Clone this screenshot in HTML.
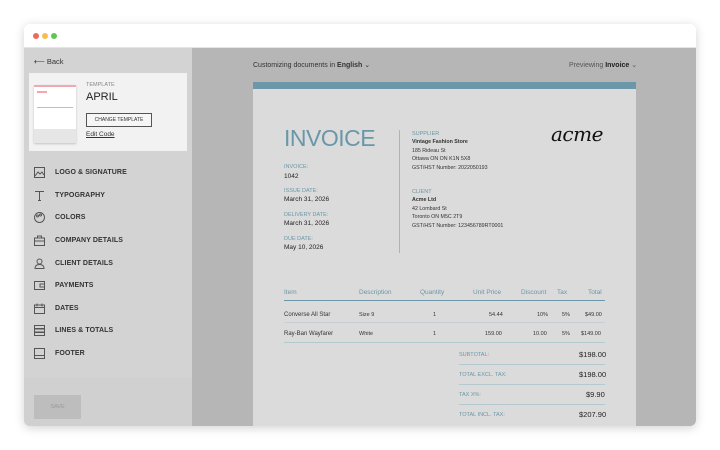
<!DOCTYPE html>
<html><head><meta charset="utf-8"><style>
*{margin:0;padding:0;box-sizing:border-box}
body{width:720px;height:450px;background:#fff;font-family:"Liberation Sans",sans-serif;position:relative;overflow:hidden}
.win{position:absolute;left:24px;top:24px;width:672px;height:402px;border-radius:6px;overflow:hidden;box-shadow:0 2px 10px rgba(0,0,0,.18);background:#fff}
.tb{height:24px;background:#fff;border-bottom:1px solid #e4e4e4;position:relative}
.dot{position:absolute;top:9px;width:6px;height:6px;border-radius:50%}
.side{position:absolute;left:0;top:24px;width:168px;height:378px;background:#d3d3d3}
.main{position:absolute;left:168px;top:24px;width:504px;height:378px;background:#b6b6b6;overflow:hidden}
.abs{position:absolute;white-space:nowrap}
.nav{position:absolute;left:31px;font-size:7px;font-weight:bold;color:#333;letter-spacing:.1px}
.ic{position:absolute;left:10px;width:11px;height:11px}
.paper{position:absolute;left:61px;top:34px;width:383px;height:350px;background:#dbdbdb}
.lbl{color:#6a97a8;font-size:5.5px}
.v{color:#222;font-size:6.5px}
.s{color:#333;font-size:5.3px;line-height:8.5px}
.th{position:absolute;top:207px;color:#6a97a8;font-size:6.5px}
.td{position:absolute;font-size:5.5px;color:#333}
</style></head><body>
<div class="win">
 <div class="tb"><div class="dot" style="left:9px;background:#ec6a5e"></div><div class="dot" style="left:18px;background:#f4bf4f"></div><div class="dot" style="left:27px;background:#61c554"></div></div>
 <div class="side">
  <div class="abs" style="left:10px;top:9px;font-size:7.5px;color:#333">⟵ Back</div>
  <div class="abs" style="left:5px;top:25px;width:158px;height:78px;background:#f2f2f2"></div>
  <div class="abs" style="left:10px;top:37px;width:42px;height:58px;background:#fff;box-shadow:0 1px 2px rgba(0,0,0,.2)">
   <div style="height:2px;background:#f3a7b0"></div>
   <div style="position:absolute;left:3px;top:6px;width:10px;height:2px;background:#f3a7b0"></div>
   <div style="position:absolute;left:3px;top:22px;width:36px;height:1px;background:#f3a7b0"></div>
   <div style="position:absolute;left:0;bottom:0;width:42px;height:14px;background:#e6e6e6"></div>
  </div>
  <div class="abs" style="left:62px;top:34px;font-size:5.5px;color:#888">TEMPLATE</div>
  <div class="abs" style="left:62px;top:43px;font-size:11px;color:#222">APRIL</div>
  <div class="abs" style="left:62px;top:65px;width:66px;height:14px;border:1px solid #555;background:#f6f6f6;font-size:5px;color:#333;text-align:center;line-height:12px">CHANGE TEMPLATE</div>
  <div class="abs" style="left:62px;top:83px;font-size:6.5px;color:#333;text-decoration:underline">Edit Code</div>
  <div class="nav" style="top:121px">LOGO &amp; SIGNATURE</div><svg class="ic" style="top:119px" viewBox="0 0 11 11" fill="none" stroke="#555"><rect x=".5" y=".5" width="10" height="10"/><path d="M1 9l3-4 2 2 2-2 2 3"/></svg>
  <div class="nav" style="top:144px">TYPOGRAPHY</div><svg class="ic" style="top:142px" viewBox="0 0 11 11" fill="none" stroke="#555"><path d="M1 1.5h9M5.5 1.5v9M4 10.5h3"/></svg>
  <div class="nav" style="top:166px">COLORS</div><svg class="ic" style="top:164px" viewBox="0 0 11 11" fill="none" stroke="#555"><circle cx="5.5" cy="5.5" r="5"/><circle cx="3.5" cy="4" r="1"/><circle cx="6.5" cy="3" r="1"/></svg>
  <div class="nav" style="top:189px">COMPANY DETAILS</div><svg class="ic" style="top:187px" viewBox="0 0 11 11" fill="none" stroke="#555"><rect x=".5" y="3" width="10" height="7.5"/><path d="M3.5 3V1h4v2M.5 6h10"/></svg>
  <div class="nav" style="top:212px">CLIENT DETAILS</div><svg class="ic" style="top:210px" viewBox="0 0 11 11" fill="none" stroke="#555"><circle cx="5.5" cy="3.5" r="2.5"/><path d="M1 10.5c0-3 2-4 4.5-4s4.5 1 4.5 4z"/></svg>
  <div class="nav" style="top:234px">PAYMENTS</div><svg class="ic" style="top:232px" viewBox="0 0 11 11" fill="none" stroke="#555"><rect x=".5" y="1.5" width="10" height="8"/><path d="M6 4h4.5v3H6z"/></svg>
  <div class="nav" style="top:257px">DATES</div><svg class="ic" style="top:255px" viewBox="0 0 11 11" fill="none" stroke="#555"><rect x=".5" y="2" width="10" height="8.5"/><path d="M.5 4.5h10M3 .5v3M8 .5v3"/></svg>
  <div class="nav" style="top:279px">LINES &amp; TOTALS</div><svg class="ic" style="top:277px" viewBox="0 0 11 11" fill="none" stroke="#555"><rect x=".5" y=".5" width="10" height="3"/><rect x=".5" y="4" width="10" height="3"/><rect x=".5" y="7.5" width="10" height="3"/></svg>
  <div class="nav" style="top:302px">FOOTER</div><svg class="ic" style="top:300px" viewBox="0 0 11 11" fill="none" stroke="#555"><rect x=".5" y=".5" width="10" height="10"/><path d="M.5 7.5h10"/></svg>
  <div class="abs" style="left:0;top:330px;width:168px;height:48px;background:#d0d0d0"></div>
  <div class="abs" style="left:10px;top:347px;width:47px;height:24px;background:#bdbdbd;font-size:5.5px;color:#999;text-align:center;line-height:24px">SAVE</div>
 </div>
 <div class="main">
  <div class="abs" style="left:61px;top:13px;font-size:7px;color:#333">Customizing documents in <b>English</b> ⌄</div>
  <div class="abs" style="left:377px;top:13px;font-size:7px;color:#555">Previewing <b style="color:#222">Invoice</b> ⌄</div>
  <div class="paper">
   <div style="height:7px;background:#6b97a8"></div>
   <div class="abs" style="left:31px;top:43px;font-size:23px;color:#6a97a8;letter-spacing:-.5px">INVOICE</div>
   <div class="abs lbl" style="left:31px;top:82px">INVOICE:</div><div class="abs v" style="left:31px;top:91px">1042</div>
   <div class="abs lbl" style="left:31px;top:106px">ISSUE DATE:</div><div class="abs v" style="left:31px;top:114px">March 31, 2026</div>
   <div class="abs lbl" style="left:31px;top:130px">DELIVERY DATE:</div><div class="abs v" style="left:31px;top:138px">March 31, 2026</div>
   <div class="abs lbl" style="left:31px;top:154px">DUE DATE:</div><div class="abs v" style="left:31px;top:162px">May 10, 2026</div>
   <div class="abs" style="left:146px;top:48px;width:1px;height:123px;background:#9fb9c3"></div>
   <div class="abs lbl" style="left:159px;top:49px">SUPPLIER</div>
   <div class="abs s" style="left:159px;top:56px"><b>Vintage Fashion Store</b><br>185 Rideau St<br>Ottawa ON ON K1N 5X8<br>GST/HST Number: 2022050193</div>
   <div class="abs lbl" style="left:159px;top:107px">CLIENT</div>
   <div class="abs s" style="left:159px;top:114px"><b>Acme Ltd</b><br>42 Lombard St<br>Toronto ON M5C 2T9<br>GST/HST Number: 123456789RT0001</div>
   <div class="abs" style="left:298px;top:40px;font-size:20px;font-family:'DejaVu Serif',serif;font-style:italic;color:#111;letter-spacing:-.5px">acme</div>
   <div class="th" style="left:31px">Item</div><div class="th" style="left:106px">Description</div><div class="th" style="left:167px">Quantity</div><div class="th" style="left:220px">Unit Price</div><div class="th" style="left:268px">Discount</div><div class="th" style="left:304px">Tax</div><div class="th" style="left:335px">Total</div>
   <div class="abs" style="left:31px;top:218px;width:321px;height:1px;background:#6b97a8"></div>
   <div class="td" style="left:31px;top:230px;font-size:6px">Converse All Star</div><div class="td" style="left:106px;top:230px">Size 9</div><div class="td" style="left:180px;top:230px">1</div><div class="td" style="left:236px;top:230px">54.44</div><div class="td" style="left:284px;top:230px">10%</div><div class="td" style="left:309px;top:230px">5%</div><div class="td" style="left:332px;top:230px">$49.00</div>
   <div class="abs" style="left:31px;top:240px;width:321px;height:1px;background:#c7d1d4"></div>
   <div class="td" style="left:31px;top:249px;font-size:6px">Ray-Ban Wayfarer</div><div class="td" style="left:106px;top:249px">White</div><div class="td" style="left:180px;top:249px">1</div><div class="td" style="left:232px;top:249px">159.00</div><div class="td" style="left:280px;top:249px">10.00</div><div class="td" style="left:309px;top:249px">5%</div><div class="td" style="left:328px;top:249px">$149.00</div>
   <div class="abs" style="left:31px;top:260px;width:321px;height:1px;background:#b4c8cf"></div>
   <div class="abs lbl" style="left:206px;top:270px">SUBTOTAL:</div><div class="abs v" style="left:326px;top:268px;font-size:7.5px">$198.00</div>
   <div class="abs" style="left:206px;top:282px;width:146px;height:1px;background:#b4c8cf"></div>
   <div class="abs lbl" style="left:206px;top:290px">TOTAL EXCL. TAX:</div><div class="abs v" style="left:326px;top:288px;font-size:7.5px">$198.00</div>
   <div class="abs" style="left:206px;top:302px;width:146px;height:1px;background:#b4c8cf"></div>
   <div class="abs lbl" style="left:206px;top:310px">TAX X%:</div><div class="abs v" style="left:333px;top:308px;font-size:7.5px">$9.90</div>
   <div class="abs" style="left:206px;top:322px;width:146px;height:1px;background:#b4c8cf"></div>
   <div class="abs lbl" style="left:206px;top:330px">TOTAL INCL. TAX:</div><div class="abs v" style="left:326px;top:328px;font-size:7.5px">$207.90</div>
  </div>
 </div>
</div>
</body></html>
